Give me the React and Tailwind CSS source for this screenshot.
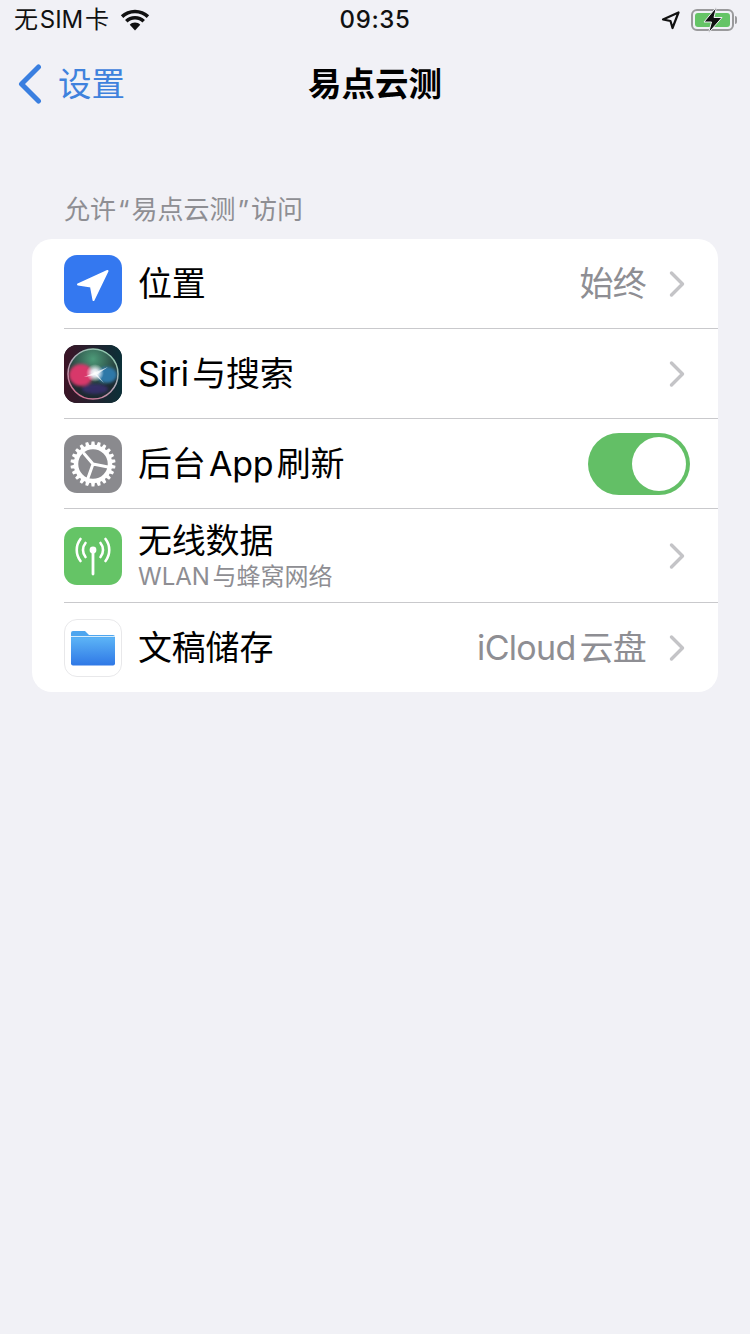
import React from "react";

const Chevron = () => (
  <svg width="18" height="28" viewBox="0 0 18 28" fill="none" className="shrink-0">
    <path d="M3.5 3l11 11-11 11" stroke="#c4c4c7" strokeWidth="3.4" strokeLinecap="round" strokeLinejoin="round" />
  </svg>
);

const LocationIcon = () => (
  <div className="w-[58px] h-[58px] rounded-[13px] bg-[#3478f0]">
    <svg width="58" height="58" viewBox="0 0 58 58">
      <path d="M14 29.5 43.500 16 29.500 45 27 31.500Z" fill="#fff" stroke="#fff" strokeWidth="2" strokeLinejoin="round" />
    </svg>
  </div>
);

const SiriIcon = () => (
  <div className="w-[58px] h-[58px] rounded-[13px] bg-[#10202a] overflow-hidden">
    <svg width="58" height="58" viewBox="0 0 58 58">
      <defs>
        <linearGradient id="siriBg" x1="0" y1="0" x2="1" y2="0">
          <stop offset="0" stopColor="#3c1426" />
          <stop offset="1" stopColor="#0b3038" />
        </linearGradient>
        <linearGradient id="siriRing" x1="0.8" y1="0" x2="0.2" y2="1">
          <stop offset="0" stopColor="#8fd0b0" />
          <stop offset="0.5" stopColor="#b0a8b8" />
          <stop offset="1" stopColor="#d46a8c" />
        </linearGradient>
        <radialGradient id="siriTop" cx="0.5" cy="0.2" r="0.6">
          <stop offset="0" stopColor="#4d9a78" />
          <stop offset="1" stopColor="#1d2a30" />
        </radialGradient>
        <radialGradient id="siriCore">
          <stop offset="0" stopColor="#fff" />
          <stop offset="0.4" stopColor="#f4f6ff" stopOpacity="0.85" />
          <stop offset="1" stopColor="#fff" stopOpacity="0" />
        </radialGradient>
        <filter id="siriBlur"><feGaussianBlur stdDeviation="1.500" /></filter>
      </defs>
      <rect width="58" height="58" fill="url(#siriBg)" />
      <circle cx="29" cy="29" r="25" fill="url(#siriTop)" />
      <g filter="url(#siriBlur)">
        <ellipse cx="17" cy="30" rx="12" ry="11" fill="#d8386a" />
        <ellipse cx="43" cy="30" rx="10" ry="8" fill="#2f78a8" />
        <ellipse cx="31" cy="44" rx="13" ry="5" fill="#3a2f70" opacity="0.85" />
      </g>
      <circle cx="29" cy="29" r="25" fill="none" stroke="url(#siriRing)" strokeWidth="1.5" />
      <circle cx="31" cy="28" r="9" fill="url(#siriCore)" />
      <path d="M20 32 32 27 44 22 33 29.500 40 38 31 30Z" fill="#fff" opacity="0.75" />
    </svg>
  </div>
);

const gearTeeth = Array.from({ length: 22 }, (_, i) => (i * 360) / 22);

const GearIcon = () => (
  <div className="w-[58px] h-[58px] rounded-[13px] bg-[#8a8a8e]">
    <svg width="58" height="58" viewBox="0 0 58 58">
      {gearTeeth.map((a) => (
        <path key={a} d="M26.800 12 27.600 6.500h2.800l.8 5.500Z" fill="#fff" transform={`rotate(${a} 29 29)`} />
      ))}
      <circle cx="29" cy="29" r="17" fill="none" stroke="#fff" strokeWidth="4.500" />
      <path d="M29 29 20 18.500M29 29 44 32M29 29 24 43" stroke="#fff" strokeWidth="3" strokeLinecap="round" />
    </svg>
  </div>
);

const AntennaIcon = () => (
  <div className="w-[58px] h-[58px] rounded-[13px] bg-[#65c466]">
    <svg width="58" height="58" viewBox="0 0 58 58" fill="none" stroke="#fff" strokeLinecap="round">
      <circle cx="29" cy="23" r="3.400" fill="#fff" stroke="none" />
      <path d="M29 25v22" strokeWidth="2.800" />
      <path d="M21.500 16a11 11 0 0 0 0 14" strokeWidth="2.600" />
      <path d="M36.500 16a11 11 0 0 1 0 14" strokeWidth="2.600" />
      <path d="M16.500 12a18 18 0 0 0 0 22" strokeWidth="2.600" />
      <path d="M41.500 12a18 18 0 0 1 0 22" strokeWidth="2.600" />
    </svg>
  </div>
);

const FolderIcon = () => (
  <div className="w-[58px] h-[58px] rounded-[13px] bg-white border border-[#e8e8ea]">
    <svg width="56" height="56" viewBox="0 0 56 56">
      <defs>
        <linearGradient id="folderFill" x1="0" y1="0" x2="0" y2="1">
          <stop offset="0" stopColor="#5cb4f6" />
          <stop offset="1" stopColor="#2f78e6" />
        </linearGradient>
      </defs>
      <path d="M6 13a2 2 0 0 1 2-2h12l4 4h24a2 2 0 0 1 2 2v4H6Z" fill="#4ea6ef" />
      <path d="M6 17.500h44v26a2 2 0 0 1-2 2H8a2 2 0 0 1-2-2Z" fill="url(#folderFill)" />
      <path d="M6 16.500h44" stroke="#d6ecfb" strokeWidth="1.200" />
    </svg>
  </div>
);

const rows = [
  { icon: <LocationIcon />, title: "位置", value: "始终", h: "h-[90px]" },
  { icon: <SiriIcon />, title: "Siri 与搜索", h: "h-[90px]" },
  { icon: <GearIcon />, title: "后台 App 刷新", toggle: true, h: "h-[90px]" },
  { icon: <AntennaIcon />, title: "无线数据", sub: "WLAN 与蜂窝网络", h: "h-[94px]" },
  { icon: <FolderIcon />, title: "文稿储存", value: "iCloud 云盘", h: "h-[89px]", last: true },
];

const Row = ({ row }) => (
  <div className="pl-[32px]">
    <div className={`${row.h} flex items-center pr-[32px] ${row.last ? "" : "border-b border-[#c9c9cc]"}`}>
      <div className="shrink-0 w-[74px]">{row.icon}</div>
      <div className="flex-1 min-w-0">
        <div className="text-[34px] leading-[40px] text-black [word-spacing:-6px] tracking-[-0.2px]">{row.title}</div>
        {row.sub && <div className="text-[24px] leading-[26px] text-[#8e8e93] mt-[3px] [word-spacing:-4px]">{row.sub}</div>}
      </div>
      {row.value && <span className="text-[34px] leading-[40px] text-[#8e8e93] mr-[22px] [word-spacing:-5px] tracking-[-0.7px]">{row.value}</span>}
      {row.toggle ? (
        <div className="w-[102px] h-[62px] rounded-full bg-[#63bf66] flex items-center justify-end pr-[4px] -mx-[4px]">
          <div className="w-[54px] h-[54px] rounded-full bg-white" />
        </div>
      ) : (
        <Chevron />
      )}
    </div>
  </div>
);

export default function App() {
  return (
    <div
      className="w-[750px] h-[1334px] bg-[#f1f1f6] overflow-hidden"
      style={{ fontFamily: '"Inter", "Noto Sans CJK SC", sans-serif' }}
    >
      {/* Status bar */}
      <div className="h-[40px] pl-[14px] pr-[13px] flex items-center justify-between relative">
        <div className="flex items-center gap-[11px]">
          <span className="text-[24px] leading-[28px] text-[#111] [word-spacing:-5px]">无 SIM 卡</span>
          <svg width="30" height="22" viewBox="1.500 0 27 21" fill="#111">
            <path d="M15 4c4.400 0 8.300 1.700 11.200 4.500l2.300-2.500C25 2.600 20.300.6 15 .6S5 2.600 1.500 6l2.300 2.500C6.700 5.700 10.600 4 15 4z" />
            <path d="M15 10c2.800 0 5.300 1.100 7.100 2.900l2.400-2.500C22 8 18.700 6.600 15 6.600S8 8 5.500 10.400l2.400 2.500C9.700 11.100 12.200 10 15 10z" />
            <path d="M15 13c-2 0-3.800.8-5 2l5 5.500 5-5.500c-1.200-1.200-3-2-5-2z" />
          </svg>
        </div>
        <span className="absolute left-0 right-0 text-center text-[24px] leading-[28px] font-medium text-[#111] tracking-[0.6px]">09:35</span>
        <div className="flex items-center gap-[10px]">
          <svg width="20" height="20" viewBox="0 0 20 20" fill="none" stroke="#111" strokeWidth="2.200" strokeLinejoin="round">
            <path d="M2 9.500 17.500 2.500 11.500 18 9.500 11Z" />
          </svg>
          <div className="relative flex items-center">
            <div className="w-[43px] h-[22px] rounded-[6px] border-2 border-[#9a9a9c] p-[2px]">
              <div className="w-full h-full rounded-[3px] bg-[#65c466]" />
            </div>
            <div className="w-[2px] h-[8px] bg-[#9a9a9c] ml-[1px] rounded-r" />
            <svg className="absolute left-[11px] -top-[3px]" width="22" height="28" viewBox="0 0 22 28">
              <path d="M14.500 1 2 16h7.500L6.500 27 20 11.500h-8Z" fill="#111" stroke="#f1f1f6" strokeWidth="1" />
            </svg>
          </div>
        </div>
      </div>

      {/* Nav bar */}
      <div className="h-[88px] relative flex items-center pl-[17px]">
        <svg width="26" height="40" viewBox="0 0 26 40" fill="none" className="mr-[15px]">
          <path d="M21.500 3 4.500 20l17 17" stroke="#3a7fe0" strokeWidth="5" strokeLinecap="round" strokeLinejoin="round" />
        </svg>
        <span className="text-[33.500px] leading-[40px] text-[#3f82dd]">设置</span>
        <span className="absolute left-0 right-0 text-center text-[33.500px] leading-[40px] font-semibold text-black">易点云测</span>
      </div>

      {/* Section */}
      <div className="pt-[65px] pb-[12px] pl-[64px] text-[26px] leading-[34px] text-[#8e8e93]">
        允许<span className="mx-[2px]">“</span>易点云测<span className="mx-[2px]">”</span>访问
      </div>

      <div className="mx-[32px] bg-white rounded-[20px] overflow-hidden">
        {rows.map((row) => (
          <Row key={row.title} row={row} />
        ))}
      </div>
    </div>
  );
}
